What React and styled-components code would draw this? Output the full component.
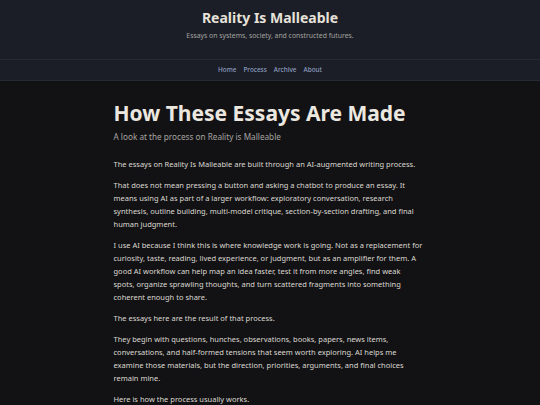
import React from 'react'
import styled, { createGlobalStyle } from 'styled-components'

const GlobalStyle = createGlobalStyle`
  html, body {
    margin: 0;
    padding: 0;
    background: #121215;
  }
  body {
    font-family: 'Noto Sans', 'DejaVu Sans', sans-serif;
    color: #dedad2;
  }
`

const paragraphs = [
  'The essays on Reality Is Malleable are built through an AI-augmented writing process.',
  'That does not mean pressing a button and asking a chatbot to produce an essay. It means using AI as part of a larger workflow: exploratory conversation, research synthesis, outline building, multi-model critique, section-by-section drafting, and final human judgment.',
  <>
    I use AI because I think this is where knowledge work is going. Not as a replacement for
    curiosity, taste, reading, lived experience, or judgment, but as an amplifier for them. A
    good AI workflow can help map an idea faster, test it from more angles, find weak
    <br />
    spots, organize sprawling thoughts, and turn scattered fragments into something coherent
    enough to share.
  </>,
  'The essays here are the result of that process.',
  'They begin with questions, hunches, observations, books, papers, news items, conversations, and half-formed tensions that seem worth exploring. AI helps me examine those materials, but the direction, priorities, arguments, and final choices remain mine.',
  'Here is how the process usually works.',
]

const links = ['Home', 'Process', 'Archive', 'About']

function App() {
  return (
    <>
      <GlobalStyle />
      <SiteHeader>
        <SiteTitle>Reality Is Malleable</SiteTitle>
        <Tagline>Essays on systems, society, and constructed futures.</Tagline>
      </SiteHeader>
      <NavBar>
        {links.map((link) => (
          <NavLink key={link} href='#'>
            {link}
          </NavLink>
        ))}
      </NavBar>
      <Article>
        <Title>How These Essays Are Made</Title>
        <Lede>A look at the process on Reality is Malleable</Lede>
        {paragraphs.map((text, i) => (
          <Paragraph key={i}>{text}</Paragraph>
        ))}
      </Article>
    </>
  )
}

const SiteHeader = styled.header`
  background: #1b1e27;
  text-align: center;
  padding: 9px 0 19px;
`

const SiteTitle = styled.h1`
  margin: 0;
  font-size: 14px;
  line-height: 18px;
  font-weight: 700;
  color: #e6e1d8;
`

const Tagline = styled.p`
  margin: 4px 0 0;
  font-size: 6.85px;
  line-height: 9px;
  color: #a3a39f;
`

const NavBar = styled.nav`
  background: #1b1e27;
  border-top: 1px solid #262a36;
  border-bottom: 1px solid #262a36;
  display: flex;
  justify-content: center;
  gap: 7px;
  padding: 5px 0 6px;
`

const NavLink = styled.a`
  font-size: 6.4px;
  line-height: 9px;
  font-weight: 500;
  color: #8d9dbf;
  text-decoration: none;
`

const Article = styled.main`
  width: 313px;
  margin: 0 auto;
  padding-top: 19px;
`

const Title = styled.h2`
  margin: 0;
  font-size: 21px;
  line-height: 26px;
  font-weight: 700;
  color: #ece8e0;
`

const Lede = styled.p`
  margin: 5px 0 16px;
  font-size: 8.2px;
  line-height: 11px;
  color: #a6a5a0;
`

const Paragraph = styled.p`
  margin: 0 0 8px;
  font-size: 7.5px;
  line-height: 13px;
  color: #dcd8d0;
`

export default App
